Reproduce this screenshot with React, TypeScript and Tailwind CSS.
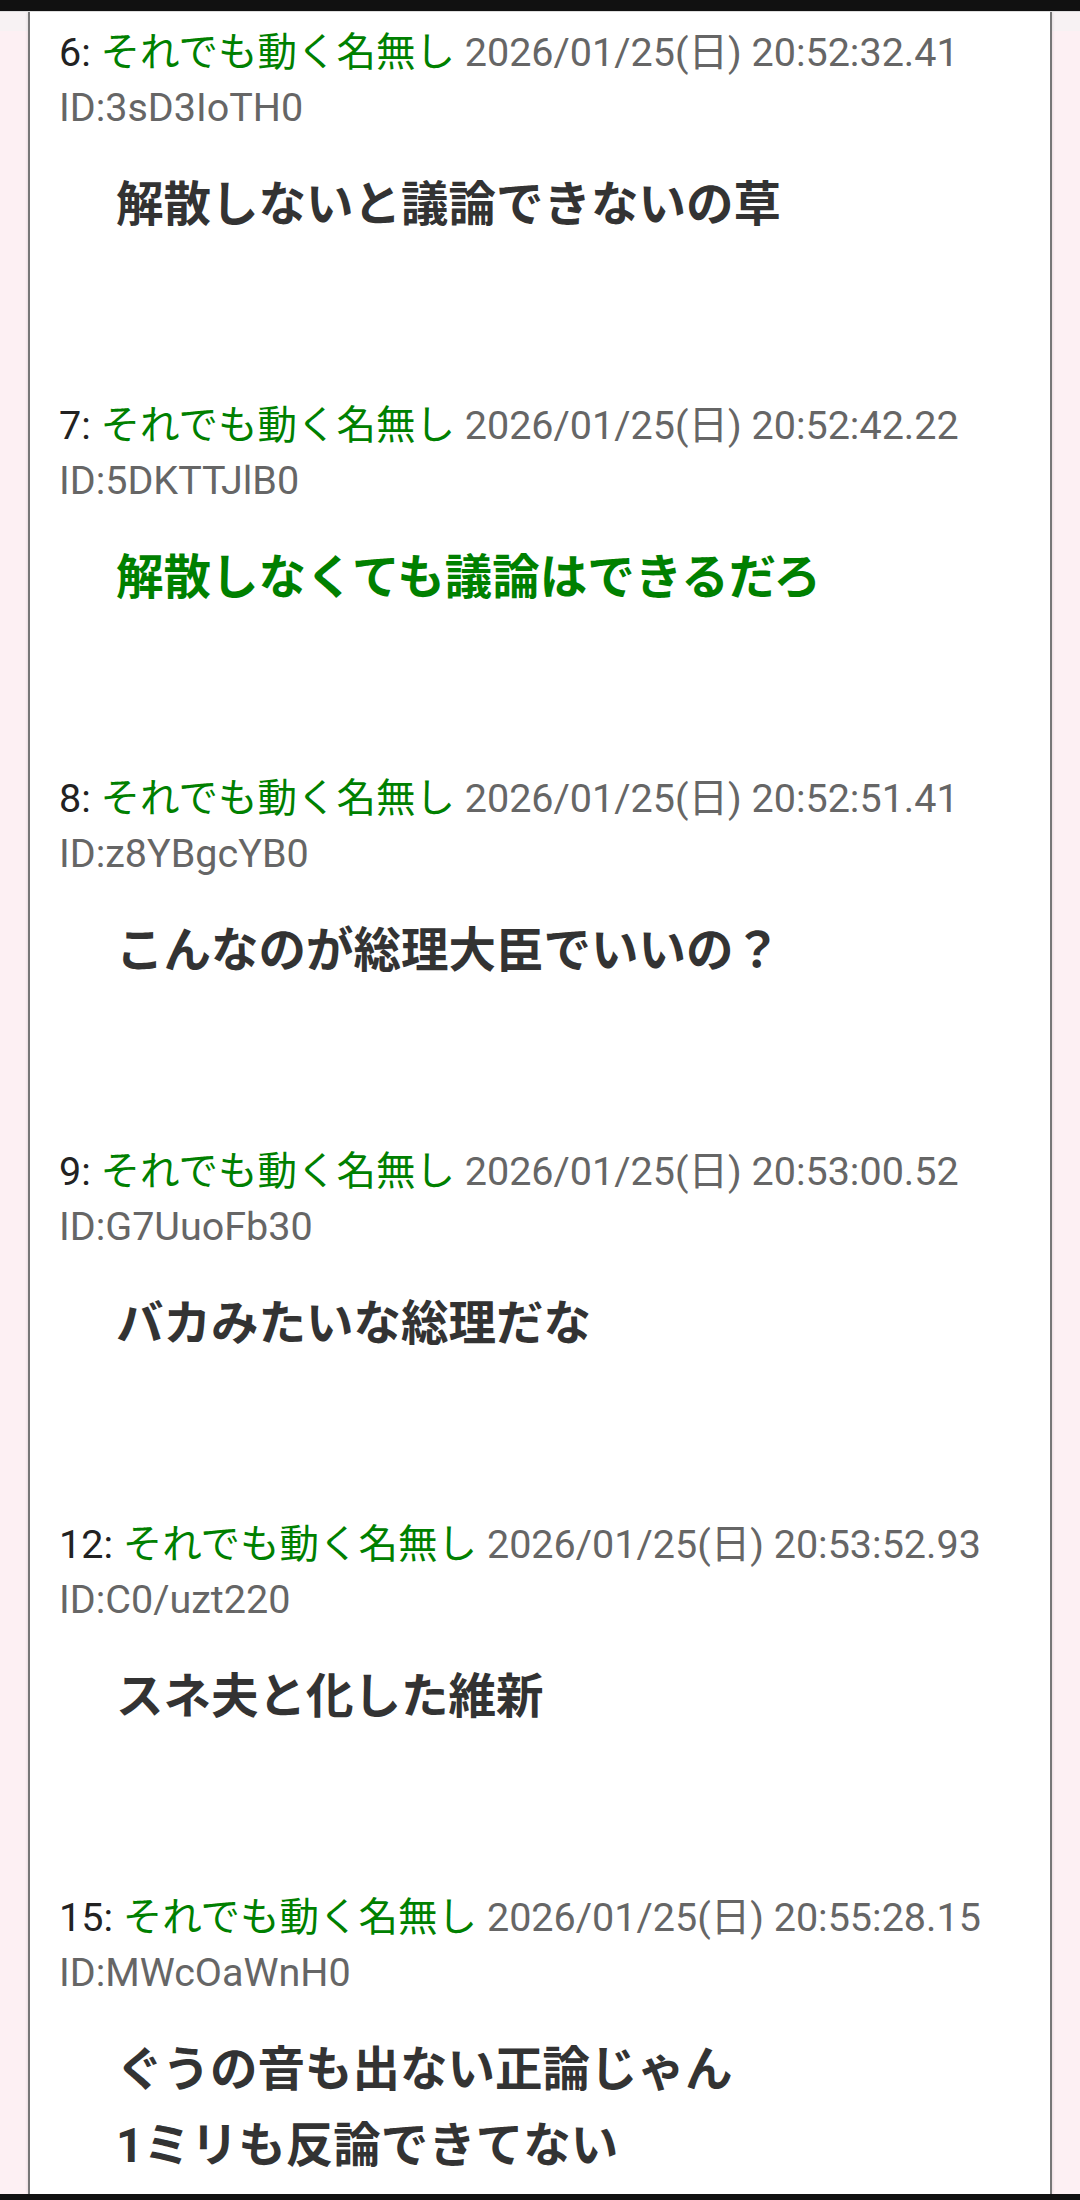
import React from "react";

type Post = { no: number; date: string; id: string; body: string[]; green?: boolean };

const posts: Post[] = [
  { no: 6, date: "2026/01/25(日) 20:52:32.41", id: "ID:3sD3IoTH0", body: ["解散しないと議論できないの草"] },
  { no: 7, date: "2026/01/25(日) 20:52:42.22", id: "ID:5DKTTJlB0", body: ["解散しなくても議論はできるだろ"], green: true },
  { no: 8, date: "2026/01/25(日) 20:52:51.41", id: "ID:z8YBgcYB0", body: ["こんなのが総理大臣でいいの？"] },
  { no: 9, date: "2026/01/25(日) 20:53:00.52", id: "ID:G7UuoFb30", body: ["バカみたいな総理だな"] },
  { no: 12, date: "2026/01/25(日) 20:53:52.93", id: "ID:C0/uzt220", body: ["スネ夫と化した維新"] },
  { no: 15, date: "2026/01/25(日) 20:55:28.15", id: "ID:MWcOaWnH0", body: ["ぐうの音も出ない正論じゃん", "1ミリも反論できてない"] },
];

export default function App() {
  return (
    <div
      className="w-[1080px] h-[2200px] overflow-hidden flex flex-col bg-[#111111]"
      style={{ fontFamily: "Roboto, 'Noto Sans CJK JP', sans-serif" }}
    >
      <div className="h-[12px] bg-[#111111] shrink-0 border-b border-[#dddddd]" />
      <div className="flex-1 flex bg-[linear-gradient(to_bottom,#f7f2f3_0px,#f7f2f3_19px,#fdf0f3_19px)] px-[28px] overflow-hidden">
        <div className="flex-1 bg-white border-x-2 border-[#777777] pl-[29px] pt-[13px] shadow-[0_0_3px_rgba(0,0,0,0.15)]">
          {posts.map((p) => (
            <div key={p.no} className="h-[373px]">
              <div className="text-[39.5px] leading-[55px]">
                <div className="whitespace-nowrap">
                  <span className="text-[#222222]">{p.no}:</span>{" "}
                  <span className="text-[#008000]">それでも動く名無し</span>{" "}
                  <span className="text-[#666666]">{p.date}</span>
                </div>
                <div className="text-[#666666]">{p.id}</div>
              </div>
              <div
                className={`mt-[32px] ml-[57px] text-[47.5px] leading-[76px] font-bold ${
                  p.green ? "text-[#008000]" : "text-[#333333]"
                }`}
              >
                {p.body.map((b, i) => (
                  <div key={i}>{b}</div>
                ))}
              </div>
            </div>
          ))}
        </div>
      </div>
      <div className="h-[6px] bg-[#111111] shrink-0" />
    </div>
  );
}
